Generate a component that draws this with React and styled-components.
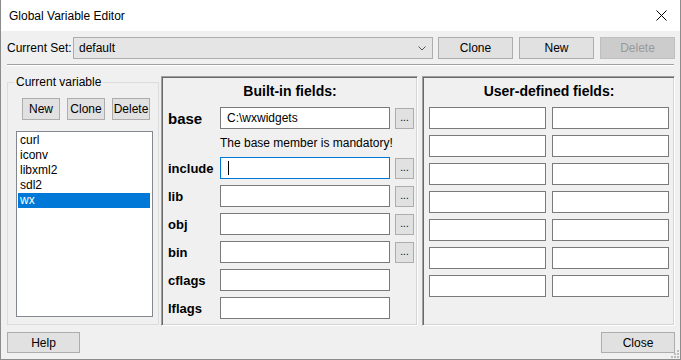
import React from 'react';
import styled, { createGlobalStyle } from 'styled-components';

const GlobalStyle = createGlobalStyle`
  html, body {
    margin: 0;
    padding: 0;
    background: #ffffff;
  }
  body {
    font-family: "Liberation Sans", Arial, sans-serif;
    font-size: 12px;
    color: #000;
  }
`;

const Window = styled.div`
  width: 681px;
  height: 360px;
  box-sizing: border-box;
  display: flex;
  flex-direction: column;
  background: #f0f0f0;
  border: 1px solid #8c8c8c;
  border-top: none;
  overflow: hidden;
`;

const TitleBar = styled.div`
  height: 31px;
  flex: none;
  display: flex;
  align-items: center;
  justify-content: space-between;
  background: #ffffff;
  padding: 0 13px 0 8px;
`;

const TitleText = styled.span`
  font-size: 12px;
  color: #000;
`;

const Body = styled.div`
  flex: 1;
  display: flex;
  flex-direction: column;
  padding: 0 5px 0 5px;
  position: relative;
`;

const TopRow = styled.div`
  display: flex;
  align-items: center;
  height: 22px;
  margin-top: 6px;
`;

const SetLabel = styled.span`
  width: 67px;
  flex: none;
  padding-left: 1px;
  box-sizing: border-box;
`;

const Combo = styled.div`
  flex: 1;
  height: 22px;
  box-sizing: border-box;
  display: flex;
  align-items: center;
  justify-content: space-between;
  background: #e5e5e5;
  border: 1px solid #adadad;
  padding: 0 6px 0 5px;
  margin-right: 5px;
`;

const Button = styled.button`
  flex: none;
  width: ${(p) => p.$w || 75}px;
  height: ${(p) => p.$h || 22}px;
  margin-left: ${(p) => p.$ml || 0}px;
  padding: 0;
  box-sizing: border-box;
  font-family: "Liberation Sans", Arial, sans-serif;
  font-size: 12px;
  color: #000;
  background: #e1e1e1;
  border: 1px solid #adadad;
  border-radius: 0;

  &:disabled {
    background: #cccccc;
    border-color: #bfbfbf;
    color: #9a9a9a;
  }
`;

const Separator = styled.div`
  margin-top: 5px;
  margin-left: 1px;
  margin-right: 1px;
  height: 1px;
  background: #a0a0a0;
  border-bottom: 1px solid #ffffff;
`;

const Main = styled.div`
  display: flex;
  margin-top: 10px;
  height: 250px;
`;

const StaticBox = styled.div`
  position: relative;
  flex: none;
  width: 152px;
  box-sizing: border-box;
  margin: 6px 2px 1px 1px;
  border: 1px solid #dcdcdc;
  padding: 15px 5px 7px 8px;
  display: flex;
  flex-direction: column;
`;

const BoxLegend = styled.span`
  position: absolute;
  top: -8px;
  left: 6px;
  padding: 0 2px;
  background: #f0f0f0;
  line-height: 14px;
`;

const BoxButtons = styled.div`
  display: flex;
  gap: 7px;
  padding-left: 6px;
`;

const ListBox = styled.div`
  margin-top: 11px;
  flex: 1;
  background: #ffffff;
  border: 1px solid #828790;
  padding: 1px 2px 0 1px;
`;

const ListItem = styled.div`
  height: 15px;
  line-height: 15px;
  padding-left: 2px;
  background: ${(p) => (p.$selected ? '#0078d7' : 'transparent')};
  color: ${(p) => (p.$selected ? '#ffffff' : '#000000')};
`;

const Panel = styled.div`
  box-sizing: border-box;
  flex: none;
  width: ${(p) => p.$width}px;
  margin-left: ${(p) => p.$ml || 0}px;
  border: 1px solid;
  border-color: #a0a0a0 #ffffff #ffffff #a0a0a0;
  box-shadow: inset 1px 1px 0 #696969, inset -1px -1px 0 #d4d4d4;
  padding: 5px 5px 0 6px;
  display: flex;
  flex-direction: column;
`;

const PanelTitle = styled.div`
  text-align: center;
  font-weight: bold;
  font-size: 14px;
  line-height: 18px;
`;

const BuiltGrid = styled.div`
  margin-top: 7px;
  display: grid;
  grid-template-columns: 47px 170px 19px;
  grid-template-rows: 22px 16px repeat(6, 22px);
  column-gap: 5px;
  row-gap: 6px;
  align-items: center;
`;

const RowLabel = styled.span`
  font-weight: bold;
  font-size: ${(p) => (p.$big ? 15 : 13)}px;
`;

const TextField = styled.div`
  height: 22px;
  box-sizing: border-box;
  background: #ffffff;
  border: 1px solid ${(p) => (p.$focused ? '#0078d7' : '#7a7a7a')};
  padding-left: 6px;
  display: flex;
  align-items: center;
  white-space: nowrap;
  overflow: hidden;
`;

const Caret = styled.span`
  display: inline-block;
  width: 1px;
  height: 14px;
  margin-left: 1px;
  background: #000;
`;

const Browse = styled.button`
  width: 19px;
  height: 21px;
  padding: 0 0 5px 0;
  box-sizing: border-box;
  background: #e1e1e1;
  border: 1px solid #adadad;
  border-radius: 0;
  font-family: "Liberation Sans", Arial, sans-serif;
  font-size: 10px;
  line-height: 1;
  display: flex;
  align-items: flex-end;
  justify-content: center;
`;

const Note = styled.span`
  grid-column: 2 / span 2;
  white-space: nowrap;
  line-height: 16px;
`;

const UserGrid = styled.div`
  margin-top: 7px;
  display: grid;
  grid-template-columns: 117px 117px;
  grid-auto-rows: 22px;
  column-gap: 6px;
  row-gap: 6px;
`;

const BottomRow = styled.div`
  display: flex;
  justify-content: space-between;
  align-items: center;
  margin-top: 6px;
  padding: 0 0 0 1px;
`;

const Grip = styled.svg`
  position: absolute;
  right: 0;
  bottom: 0;
`;

const builtIn = [
  { name: 'include', browse: true, focused: true },
  { name: 'lib', browse: true },
  { name: 'obj', browse: true },
  { name: 'bin', browse: true },
  { name: 'cflags' },
  { name: 'lflags' },
];

const variables = ['curl', 'iconv', 'libxml2', 'sdl2', 'wx'];

const App = () => {
  return (
    <Window>
      <GlobalStyle />
      <TitleBar>
        <TitleText>Global Variable Editor</TitleText>
        <svg width="11" height="11" viewBox="0 0 11 11">
          <path d="M0.5 0.5 L10.5 10.5 M10.5 0.5 L0.5 10.5" stroke="#000" strokeWidth="1" fill="none" />
        </svg>
      </TitleBar>

      <Body>
        <TopRow>
          <SetLabel>Current Set:</SetLabel>
          <Combo>
            <span>default</span>
            <svg width="8" height="5" viewBox="0 0 8 5">
              <path d="M0.5 0.5 L4 4 L7.5 0.5" stroke="#555" strokeWidth="1" fill="none" />
            </svg>
          </Combo>
          <Button>Clone</Button>
          <Button $ml={6}>New</Button>
          <Button $ml={6} disabled>Delete</Button>
        </TopRow>

        <Separator />

        <Main>
          <StaticBox>
            <BoxLegend>Current variable</BoxLegend>
            <BoxButtons>
              <Button $w={38}>New</Button>
              <Button $w={38}>Clone</Button>
              <Button $w={38}>Delete</Button>
            </BoxButtons>
            <ListBox>
              {variables.map((v) => (
                <ListItem key={v} $selected={v === 'wx'}>{v}</ListItem>
              ))}
            </ListBox>
          </StaticBox>

          <Panel $width={257}>
            <PanelTitle>Built-in fields:</PanelTitle>
            <BuiltGrid>
              <RowLabel $big>base</RowLabel>
              <TextField>C:\wxwidgets</TextField>
              <Browse>...</Browse>
              <span />
              <Note>The base member is mandatory!</Note>
              {builtIn.map((f) => (
                <React.Fragment key={f.name}>
                  <RowLabel>{f.name}</RowLabel>
                  <TextField $focused={f.focused}>{f.focused && <Caret />}</TextField>
                  {f.browse ? <Browse>...</Browse> : <span />}
                </React.Fragment>
              ))}
            </BuiltGrid>
          </Panel>

          <Panel $width={253} $ml={4}>
            <PanelTitle>User-defined fields:</PanelTitle>
            <UserGrid>
              {Array.from({ length: 14 }).map((_, i) => (
                <TextField key={i} />
              ))}
            </UserGrid>
          </Panel>
        </Main>

        <BottomRow>
          <Button $w={73} $h={21}>Help</Button>
          <Button $w={74} $h={21}>Close</Button>
        </BottomRow>

        <Grip width="10" height="10" viewBox="0 0 10 10">
          <g fill="#bcbcbc">
            <rect x="7" y="1" width="2" height="2" />
            <rect x="4" y="4" width="2" height="2" />
            <rect x="7" y="4" width="2" height="2" />
            <rect x="1" y="7" width="2" height="2" />
            <rect x="4" y="7" width="2" height="2" />
            <rect x="7" y="7" width="2" height="2" />
          </g>
        </Grip>
      </Body>
    </Window>
  );
};

export default App;
